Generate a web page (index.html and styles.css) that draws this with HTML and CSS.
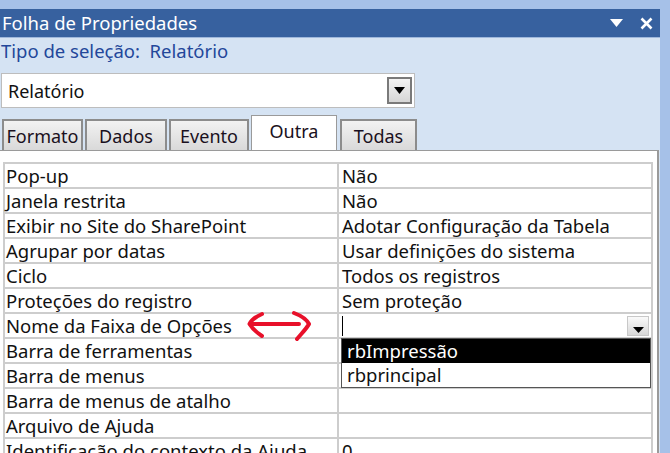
FILE: index.html
```html
<!DOCTYPE html>
<html lang="pt">
<head>
<meta charset="utf-8">
<title>Folha de Propriedades</title>
<link rel="stylesheet" href="styles.css">
</head>
<body>
<div class="frame">
  <div class="window">
    <div class="titlebar">
      <span class="title">Folha de Propriedades</span>
      <span class="title-icons">
        <svg class="tri" width="13" height="8" viewBox="0 0 13 8"><path d="M0 0H13L6.5 8Z" fill="#fff"/></svg>
        <svg class="close" width="13" height="13" viewBox="0 0 13 13"><path d="M1.5 1.5L11.5 11.5M11.5 1.5L1.5 11.5" stroke="#fff" stroke-width="2.6"/></svg>
      </span>
    </div>
    <div class="subtitle">Tipo de seleção:&nbsp; Relatório</div>
    <div class="combo">
      <span class="combo-text">Relatório</span>
      <span class="combo-btn"><svg width="11" height="7" viewBox="0 0 11 7"><path d="M0 0H11L5.5 7Z" fill="#000"/></svg></span>
    </div>
    <div class="tabs">
      <span class="tab t1">Formato</span>
      <span class="tab t2">Dados</span>
      <span class="tab t3">Evento</span>
      <span class="tab active">Outra</span>
      <span class="tab t5">Todas</span>
    </div>
    <div class="panel">
      <div class="grid">
        <div class="cell">Pop-up</div><div class="cell">Não</div>
        <div class="cell">Janela restrita</div><div class="cell">Não</div>
        <div class="cell">Exibir no Site do SharePoint</div><div class="cell">Adotar Configuração da Tabela</div>
        <div class="cell">Agrupar por datas</div><div class="cell">Usar definições do sistema</div>
        <div class="cell">Ciclo</div><div class="cell">Todos os registros</div>
        <div class="cell">Proteções do registro</div><div class="cell">Sem proteção</div>
        <div class="cell label-arrow">Nome da Faixa de Opções
          <svg class="red-arrow" width="68" height="32" viewBox="0 0 68 32"><path d="M15 4C8 7 4 11 2.5 14C5 18 9 22 15 26M5 14H52M47 3C55 6 60 10 62 14C60 18 55 23 50 29" fill="none" stroke="#e8102a" stroke-width="4" stroke-linecap="round" stroke-linejoin="round"/></svg>
        </div>
        <div class="cell edit">
          <span class="caret"></span>
          <span class="mini-btn"><svg width="11" height="6" viewBox="0 0 11 6"><path d="M0 0H11L5.5 6Z" fill="#000"/></svg></span>
          <div class="droplist">
            <div class="opt selected">rbImpressão</div>
            <div class="opt">rbprincipal</div>
          </div>
        </div>
        <div class="cell">Barra de ferramentas</div><div class="cell"></div>
        <div class="cell">Barra de menus</div><div class="cell"></div>
        <div class="cell">Barra de menus de atalho</div><div class="cell"></div>
        <div class="cell">Arquivo de Ajuda</div><div class="cell"></div>
        <div class="cell">Identificação do contexto da Ajuda</div><div class="cell">0</div>
      </div>
    </div>
  </div>
</div>
</body>
</html>
```
FILE: styles.css
```css
html, body {
  margin: 0;
  padding: 0;
  width: 670px;
  height: 453px;
  overflow: hidden;
}
body {
  font-family: "Noto Sans", "Open Sans", sans-serif;
  font-size: 18.5px;
  color: #111;
}
.frame {
  width: 670px;
  height: 453px;
  box-sizing: border-box;
  padding: 9px 10px 0 0;
  background: #a6c1e8;
  overflow: hidden;
}
.window {
  background: #d5e3f3;
  height: 100%;
  display: flex;
  flex-direction: column;
}
.titlebar {
  height: 28px;
  flex: none;
  background: #37619f;
  display: flex;
  align-items: center;
  justify-content: space-between;
  padding: 0 7px 0 2px;
  color: #fff;
  font-size: 18.5px;
  border-bottom: 1px solid #9fb8dc;
}
.title { line-height: 28px; }
.title-icons {
  display: flex;
  align-items: center;
  gap: 17px;
}
.subtitle {
  flex: none;
  height: 28px;
  line-height: 26px;
  padding-left: 1px;
  color: #23479a;
  font-size: 18.5px;
}
.combo {
  flex: none;
  margin: 7px 0 0 1px;
  width: 414px;
  height: 35px;
  box-sizing: border-box;
  background: #fff;
  border: 1px solid #bdbdbd;
  display: flex;
  align-items: center;
  justify-content: space-between;
  padding: 0 2px 0 6px;
  font-size: 18px;
}
.combo-btn {
  width: 25px;
  height: 27px;
  box-sizing: border-box;
  border: 2px solid #7a7a7a;
  background: linear-gradient(#f4f4f4, #d6d6d6);
  display: flex;
  align-items: center;
  justify-content: center;
}
.tabs {
  flex: none;
  margin-top: 7px;
  height: 35px;
  display: flex;
  align-items: flex-end;
  padding-left: 2px;
  gap: 2px;
}
.tab {
  height: 31px;
  box-sizing: border-box;
  border: 2px solid #8c8c8c;
  border-bottom: none;
  background: linear-gradient(#f2f2f2, #d9d9d9);
  line-height: 30px;
  font-size: 18px;
  color: #1a1020;
  text-align: center;
}
.t1 { width: 81px; }
.t2 { width: 82px; }
.t3 { width: 80px; }
.t5 { width: 77px; }
.tab.active {
  width: 86px;
  height: 35px;
  background: #fff;
  border: 1px solid #9a9a9a;
  border-bottom: none;
  line-height: 30px;
  margin: 0 1px 0 0;
}
.panel {
  flex: 1;
  background: #fff;
  border-top: 1px solid #9a9a9a;
  border-right: 2px solid #9a9a9a;
  margin-right: 1px;
  padding: 11px 4px 0 3px;
}
.grid {
  display: grid;
  grid-template-columns: 334px 1fr;
  border-top: 2px solid #cdcdcd;
  border-left: 2px solid #cdcdcd;
}
.cell {
  height: 23px;
  line-height: 23px;
  padding-left: 1px;
  border-right: 2px solid #cdcdcd;
  border-bottom: 2px solid #cdcdcd;
  white-space: nowrap;
  overflow: visible;
  position: relative;
}
.cell:nth-child(2n) { padding-left: 3px; }
.label-arrow { z-index: 1; }
.red-arrow {
  position: absolute;
  left: 242px;
  top: -4px;
}
.edit {
  display: flex;
  align-items: center;
  justify-content: space-between;
  padding-right: 2px;
}
.cell.edit { padding-left: 1px; }
.caret {
  width: 1px;
  height: 20px;
  background: #000;
  margin-left: 2px;
}
.mini-btn {
  width: 22px;
  height: 20px;
  box-sizing: border-box;
  border: 1px solid #c8c8c8;
  background: linear-gradient(#fafafa, #d8d8d8);
  display: flex;
  align-items: flex-end;
  justify-content: center;
  padding-bottom: 2px;
}
.droplist {
  position: absolute;
  left: 2px;
  right: 0;
  top: 24px;
  background: #fff;
  border: 1px solid #555;
  z-index: 2;
}
.opt {
  height: 24px;
  line-height: 24px;
  padding-left: 5px;
}
.opt.selected {
  background: #000;
  color: #fff;
}
```
